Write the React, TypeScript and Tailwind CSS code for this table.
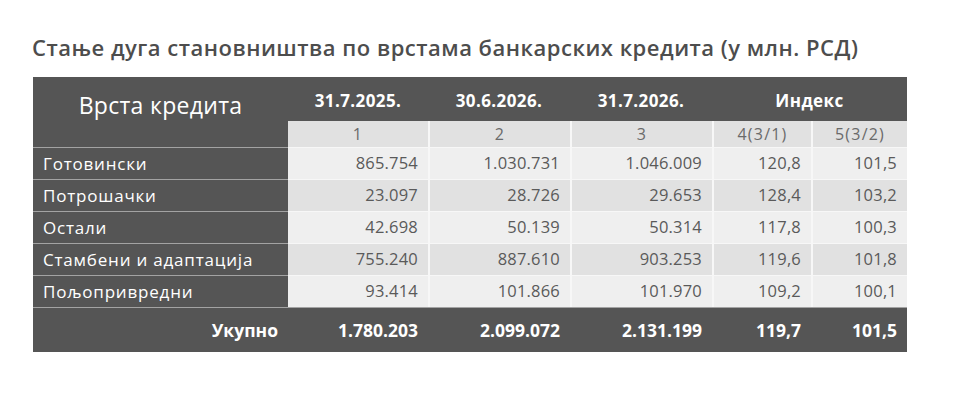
import React from "react";

const rows = [
  ["Готовински", "865.754", "1.030.731", "1.046.009", "120,8", "101,5"],
  ["Потрошачки", "23.097", "28.726", "29.653", "128,4", "103,2"],
  ["Остали", "42.698", "50.139", "50.314", "117,8", "100,3"],
  ["Стамбени и адаптација", "755.240", "887.610", "903.253", "119,6", "101,8"],
  ["Пољопривредни", "93.414", "101.866", "101.970", "109,2", "100,1"],
];

export default function App() {
  return (
    <div
      className="w-[970px] h-[403px] bg-white overflow-hidden"
      style={{ fontFamily: '"Open Sans", "Noto Sans", sans-serif' }}
    >
      <div className="pl-[32px] pt-[33px] h-[77px]">
        <h1 className="text-[22px] leading-[28px] font-semibold tracking-[0.5px] text-[#4d4d4d]">
          Стање дуга становништва по врстама банкарских кредита (у млн. РСД)
        </h1>
      </div>
      <div className="ml-[33px] w-[874px] grid grid-cols-[255px_140px_142px_142px_99px_96px]">
        {/* header */}
        <div className="row-span-2 bg-[#555555] text-white text-[23px] tracking-[0.3px] flex items-start justify-center pt-[11px]">
          Врста кредита
        </div>
        {["31.7.2025.", "30.6.2026.", "31.7.2026."].map((d) => (
          <div
            key={d}
            className="h-[44px] bg-[#555555] text-white font-bold text-[17px] tracking-[0.4px] flex items-center justify-center pt-[4px]"
          >
            {d}
          </div>
        ))}
        <div className="col-span-2 h-[44px] bg-[#555555] text-white font-bold text-[17px] tracking-[0.4px] flex items-center justify-center pt-[4px]">
          Индекс
        </div>
        {["1", "2", "3", "4(3/1)", "5(3/2)"].map((n, i) => (
          <div
            key={n}
            className={`h-[26px] bg-[#e1e1e1] text-[#6a6a6a] text-[16px] tracking-[1.2px] flex items-center justify-center ${
              i > 0 ? "border-l-2 border-[#f7f7f7]" : ""
            }`}
          >
            {n}
          </div>
        ))}
        {rows.map((r, ri) => (
          <React.Fragment key={r[0]}>
            <div className="h-[32px] bg-[#555555] border-t border-[#a3a3a3] text-white text-[17px] tracking-[0.8px] pl-[10px] flex items-center">
              {r[0]}
            </div>
            {r.slice(1).map((v, ci) => (
              <div
                key={ci}
                className={`h-[32px] border-t border-[#f7f7f7] text-[#5a5a5a] text-[16.5px] tracking-[0.2px] pr-[10px] flex items-center justify-end ${
                  ci > 0 ? "border-l-2 border-l-[#f7f7f7]" : ""
                } ${ri % 2 === 0 ? "bg-[#efefef]" : "bg-[#e1e1e1]"}`}
              >
                {v}
              </div>
            ))}
          </React.Fragment>
        ))}
        <div className="h-[45px] bg-[#555555] border-t border-[#a3a3a3] text-white font-bold text-[17.5px] pr-[10px] flex items-center justify-end">
          Укупно
        </div>
        {["1.780.203", "2.099.072", "2.131.199", "119,7", "101,5"].map((v) => (
          <div
            key={v}
            className="h-[45px] bg-[#555555] border-t border-[#a3a3a3] text-white font-bold text-[17.5px] pr-[10px] flex items-center justify-end"
          >
            {v}
          </div>
        ))}
      </div>
    </div>
  );
}
